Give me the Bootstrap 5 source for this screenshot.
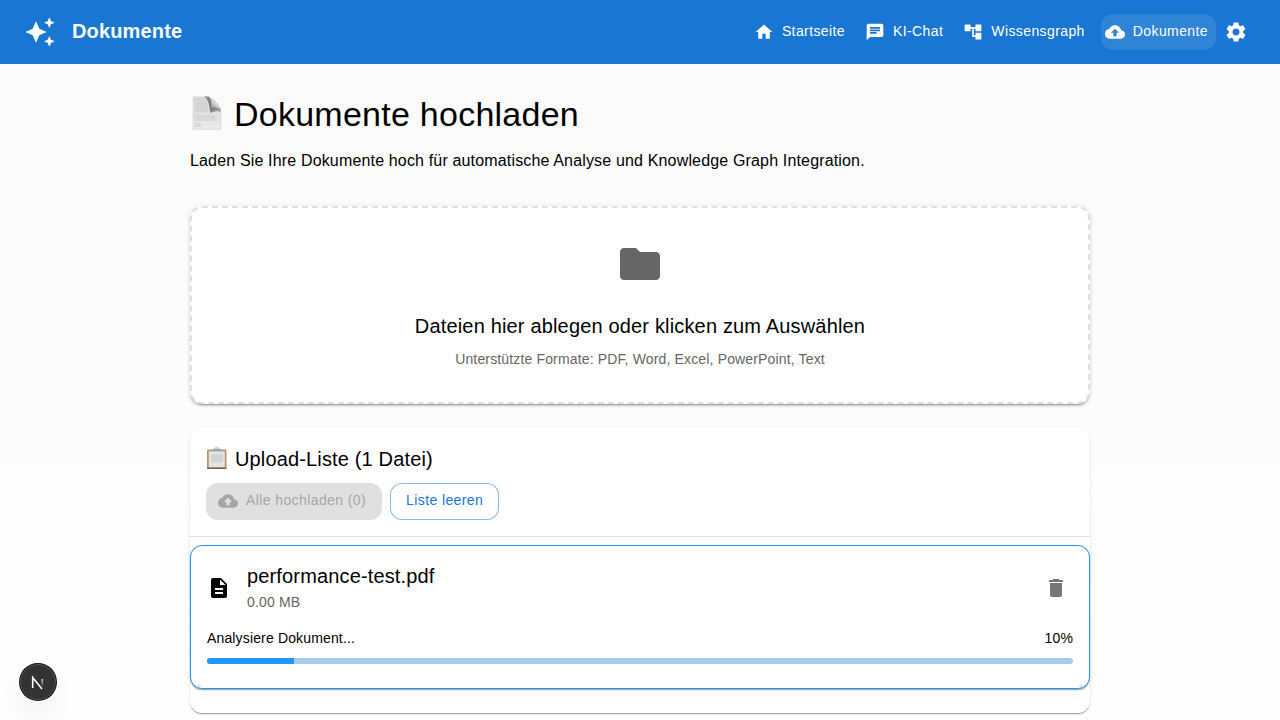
<!DOCTYPE html>
<html lang="de">
<head>
<meta charset="utf-8">
<meta name="viewport" content="width=device-width, initial-scale=1">
<title>Dokumente</title>
<link href="https://cdn.jsdelivr.net/npm/bootstrap@5.3.0/dist/css/bootstrap.min.css" rel="stylesheet">
<style>
body{font-family:"Liberation Sans",Arial,sans-serif;font-size:16px;line-height:1.5;letter-spacing:.01em;color:#000;background:#fff linear-gradient(#fafafa,#fff) no-repeat 0 0/100% 855px;min-height:720px}
svg{fill:currentColor;display:block;flex:none}
.topbar{height:64px;background:#1976d2;color:#fff;padding:0 24px}
.brand-title{font-size:20px;font-weight:700;line-height:32px;letter-spacing:.0075em;margin:-3px 0 0 16px}
.btn-app{--bs-btn-padding-x:16px;--bs-btn-padding-y:6px;--bs-btn-font-size:14px;--bs-btn-line-height:24.5px;--bs-btn-border-width:0;--bs-btn-border-radius:12px;letter-spacing:.02857em;display:inline-flex;align-items:center;height:36.5px;white-space:nowrap}
.btn-app svg{margin:0 8px 0 -4px}
.btn-app span{margin-top:-2px}
.btn-top{--bs-btn-padding-x:8px;--bs-btn-color:#fff;--bs-btn-hover-color:#fff;height:36px}
.btn-top.current{background:rgba(255,255,255,.1)}
.page{width:900px;margin:0 auto;padding-top:29px}
.page-title{font-size:34px;line-height:42px;font-weight:400;letter-spacing:.00735em;margin:0 0 14px}
.page-title svg{margin:-2px 10px 0 0}
.surface{background:#fff;border-radius:12px;box-shadow:0 2px 1px -1px rgba(0,0,0,.2),0 1px 1px rgba(0,0,0,.14),0 1px 3px rgba(0,0,0,.12)}
.dropzone{height:198px;border:2px dashed #e0e0e0;margin-top:33px;padding-top:32px;box-shadow:0 3px 1px -2px rgba(0,0,0,.2),0 2px 2px rgba(0,0,0,.14),0 1px 5px rgba(0,0,0,.12)}
.title-sm{font-size:20px;line-height:32px;font-weight:400;letter-spacing:.0075em;margin:0}
.drop-title{margin-top:22px;letter-spacing:.0083em}
.drop-note{margin-top:7px}
.text-sm{font-size:14px;line-height:20px;letter-spacing:.01071em}
.gray{color:#666}
.list-surface{margin-top:24px;height:285px}
.list-head{height:109px;padding:15px 16px 0;border-bottom:1px solid #e0e0e0}
.list-head h2 svg{margin:-3px 7px 0 0}
.btn-off{background:#e0e0e0;color:#a6a6a6}
.btn-line{--bs-btn-color:#1976d2;--bs-btn-hover-color:#1976d2;box-shadow:inset 0 0 0 1px rgba(25,118,210,.5)}
.file-item{border:1px solid #2196f3;height:144px;margin-top:8px;padding:14px 16px}
.file-row svg{margin-top:4px}
.file-row svg:last-child{margin-right:5px}
.progress-app{--bs-progress-height:6px;--bs-progress-bg:#a7caed;--bs-progress-bar-bg:#2196f3;--bs-progress-border-radius:4px;margin-top:10px}
.dev-badge{left:19px;top:663px;width:38px;height:38px;box-shadow:0 16px 32px -8px rgba(0,0,0,.14)}
</style>
</head>
<body>
<header class="topbar d-flex align-items-center">
  <svg width="32" height="32" viewBox="0 0 24 24"><path d="m19 9 1.25-2.75L23 5l-2.75-1.25L19 1l-1.25 2.75L15 5l2.75 1.25zm-7.5.5L9 4 6.5 9.5 1 12l5.5 2.5L9 20l2.5-5.5L17 12zM19 15l-1.25 2.75L15 19l2.75 1.25L19 23l1.25-2.75L23 19l-2.75-1.25z"/></svg>
  <div class="brand-title">Dokumente</div>
  <nav class="d-flex align-items-center gap-2 ms-auto">
    <a class="btn btn-app btn-top" href="#"><svg width="20" height="20" viewBox="0 0 24 24"><path d="M10 20v-6h4v6h5v-8h3L12 3 2 12h3v8z"/></svg><span>Startseite</span></a>
    <a class="btn btn-app btn-top" href="#"><svg width="20" height="20" viewBox="0 0 24 24"><path d="M20 2H4c-1.1 0-1.99.9-1.99 2L2 22l4-4h14c1.1 0 2-.9 2-2V4c0-1.1-.9-2-2-2M6 9h12v2H6zm8 5H6v-2h8zm4-6H6V6h12z"/></svg><span>KI-Chat</span></a>
    <a class="btn btn-app btn-top" href="#"><svg width="20" height="20" viewBox="0 0 24 24"><path d="M22 11V3h-7v3H9V3H2v8h7V8h2v10h4v3h7v-8h-7v3h-2V8h2v3z"/></svg><span>Wissensgraph</span></a>
    <a class="btn btn-app btn-top current" href="#"><svg width="20" height="20" viewBox="0 0 24 24"><path d="M19.35 10.04C18.67 6.59 15.64 4 12 4 9.11 4 6.6 5.64 5.35 8.04 2.34 8.36 0 10.91 0 14c0 3.31 2.69 6 6 6h13c2.76 0 5-2.24 5-5 0-2.64-2.05-4.78-4.65-4.96M14 13v4h-4v-4H7l5-5 5 5z"/></svg><span>Dokumente</span></a>
  </nav>
  <a class="p-2 text-white" href="#" aria-label="Einstellungen"><svg width="24" height="24" viewBox="0 0 24 24"><path d="M19.14 12.94c.04-.3.06-.61.06-.94 0-.32-.02-.64-.07-.94l2.03-1.58c.18-.14.23-.41.12-.61l-1.92-3.32c-.12-.22-.37-.29-.59-.22l-2.39.96c-.5-.38-1.03-.7-1.62-.94l-.36-2.54c-.04-.24-.24-.41-.48-.41h-3.84c-.24 0-.43.17-.47.41l-.36 2.54c-.59.24-1.13.57-1.62.94l-2.39-.96c-.22-.08-.47 0-.59.22L2.74 8.87c-.12.21-.08.47.12.61l2.03 1.58c-.05.3-.09.63-.09.94s.02.64.07.94l-2.03 1.58c-.18.14-.23.41-.12.61l1.92 3.32c.12.22.37.29.59.22l2.39-.96c.5.38 1.03.7 1.62.94l.36 2.54c.05.24.24.41.48.41h3.84c.24 0 .44-.17.47-.41l.36-2.54c.59-.24 1.13-.56 1.62-.94l2.39.96c.22.08.47 0 .59-.22l1.92-3.32c.12-.22.07-.47-.12-.61zM12 15.6c-1.98 0-3.6-1.62-3.6-3.6s1.62-3.6 3.6-3.6 3.6 1.62 3.6 3.6-1.62 3.6-3.6 3.6"/></svg></a>
</header>

<main class="page">
  <h1 class="page-title d-flex align-items-center">
    <svg width="34" height="36" viewBox="0 0 34 36">
      <defs>
        <linearGradient id="sheet" x1="0" y1="0" x2="0" y2="1"><stop offset="0" stop-color="#d6d6d6"/><stop offset="1" stop-color="#ebebeb"/></linearGradient>
        <linearGradient id="fold" x1="1" y1="0" x2=".1" y2="1"><stop offset="0" stop-color="#fafafa"/><stop offset=".5" stop-color="#d8d8d8"/><stop offset="1" stop-color="#777"/></linearGradient>
        <linearGradient id="shade" x1="1" y1="1" x2="0" y2="0"><stop offset="0" stop-color="#aaa"/><stop offset=".5" stop-color="#555"/><stop offset="1" stop-color="#888"/></linearGradient>
      </defs>
      <path d="M3 1.5h15.5C22 3 30 9 31 14v20.5H3z" fill="url(#sheet)"/>
      <path d="M5 4.5h5M5 8h12M5 10h13M5 12h13M5 14h13M5 16h14M5 21h20M5 23h22M5 25h22M5 29h5M5 31h7" stroke="#c6c6c6" stroke-width=".8" fill="none"/>
      <path d="M14 1.5h4.500c3 1 11.500 9 12.500 13.500V17c-3-1.500-7-1-10.500 1C19 12 20 6 14 1.500z" fill="url(#shade)" opacity=".8"/>
      <path d="M18.500 1.500C22 4 21.500 8 20.500 13c4-1.500 9-.5 10.500 2-.5-4-8.500-12-12.500-13.500z" fill="url(#fold)"/>
      <path d="M3.2 1.5v32.800h27.600V17" stroke="#cfcfcf" stroke-width=".6" fill="none"/>
    </svg><span>Dokumente hochladen</span></h1>
  <p class="mb-0">Laden Sie Ihre Dokumente hoch für automatische Analyse und Knowledge Graph Integration.</p>

  <section class="surface dropzone text-center">
    <svg class="mx-auto gray" width="48" height="48" viewBox="0 0 24 24"><path d="M10 4H4c-1.1 0-1.99.9-1.99 2L2 18c0 1.1.9 2 2 2h16c1.1 0 2-.9 2-2V8c0-1.1-.9-2-2-2h-8z"/></svg>
    <h2 class="title-sm drop-title">Dateien hier ablegen oder klicken zum Auswählen</h2>
    <div class="text-sm gray drop-note">Unterstützte Formate: PDF, Word, Excel, PowerPoint, Text</div>
  </section>

  <section class="surface list-surface">
    <div class="list-head">
      <h2 class="title-sm d-flex align-items-center">
        <svg width="22" height="24" viewBox="0 0 22 24">
          <rect x="1" y="3.500" width="19.500" height="19.500" rx="1.200" fill="#b8966a"/>
          <path d="M1 21.500h19.500v.7q0 .8-1 .8H2q-1 0-1-.8z" fill="#80603e"/>
          <rect x="2.800" y="5" width="16" height="16.200" fill="#e4e4e4"/>
          <rect x="5" y="8.500" width="12" height="8" fill="#d3d3d3"/>
          <path d="M3 5.500V4q4 0 5-1.500h5.500Q14.500 4 18.500 4v1.500z" fill="#a4a4a2"/>
          <path d="M8.800 3q0-1.800 2-1.800t2 1.800" stroke="#b9ced8" fill="none"/>
        </svg>Upload-Liste (1 Datei)</h2>
      <div class="d-flex gap-2 mt-2">
        <button class="btn btn-app btn-off" type="button"><svg width="20" height="20" viewBox="0 0 24 24"><path d="M19.35 10.04C18.67 6.59 15.64 4 12 4 9.11 4 6.6 5.64 5.35 8.04 2.34 8.36 0 10.91 0 14c0 3.31 2.69 6 6 6h13c2.76 0 5-2.24 5-5 0-2.64-2.05-4.78-4.65-4.96M14 13v4h-4v-4H7l5-5 5 5z"/></svg><span>Alle hochladen (0)</span></button>
        <button class="btn btn-app btn-line" type="button"><span>Liste leeren</span></button>
      </div>
    </div>
    <article class="surface file-item">
      <div class="file-row d-flex align-items-center">
        <svg width="24" height="24" viewBox="0 0 24 24"><path d="M14 2H6c-1.1 0-1.99.9-1.99 2L4 20c0 1.1.89 2 1.99 2H18c1.1 0 2-.9 2-2V8zm2 16H8v-2h8zm0-4H8v-2h8zm-3-5V3.5L18.5 9z"/></svg>
        <div class="flex-grow-1 ms-3">
          <h3 class="title-sm">performance-test.pdf</h3>
          <div class="text-sm gray">0.00 MB</div>
        </div>
        <svg width="24" height="24" viewBox="0 0 24 24"><path fill="#757575" d="M6 19c0 1.1.9 2 2 2h8c1.1 0 2-.9 2-2V7H6zM19 4h-3.5l-1-1h-5l-1 1H5v2h14z"/></svg>
      </div>
      <div class="d-flex justify-content-between text-sm mt-3"><span>Analysiere Dokument...</span><span>10%</span></div>
      <div class="progress progress-app"><div class="progress-bar" style="width:10%"></div></div>
    </article>
  </section>
</main>

<div class="dev-badge position-fixed rounded-circle">
  <svg width="38" height="38" viewBox="0 0 38 38">
    <defs><linearGradient id="nfade" x1="0" y1="0" x2="0" y2="1"><stop offset="0" stop-color="#fff" stop-opacity=".8"/><stop offset="1" stop-color="#fff" stop-opacity=".1"/></linearGradient></defs>
    <circle cx="19" cy="19" r="19" fill="#111"/><circle cx="19" cy="19" r="17.5" fill="#333" stroke="#555" stroke-width="1"/>
    <path d="M13.7 25V14.500l9.300 11.500" fill="none" stroke="#fff" stroke-width="1.600"/>
    <rect x="22.500" y="16" width="1.600" height="7" fill="url(#nfade)"/>
  </svg>
</div>
<script src="https://cdn.jsdelivr.net/npm/bootstrap@5.3.0/dist/js/bootstrap.bundle.min.js"></script>
</body>
</html>
